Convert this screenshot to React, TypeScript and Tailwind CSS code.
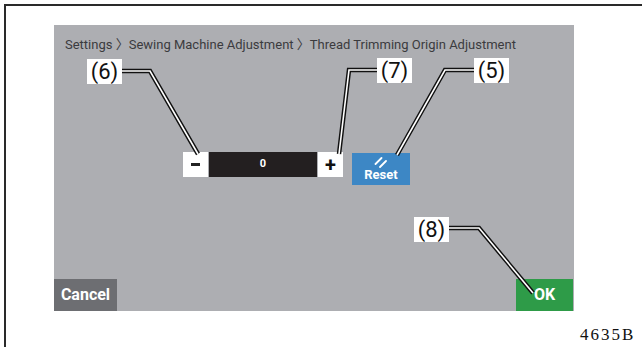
const callouts = [
  { label: "(6)", left: 87, top: 59 },
  { label: "(7)", left: 377, top: 58 },
  { label: "(5)", left: 474, top: 58 },
  { label: "(8)", left: 414, top: 217 },
];

const leaders = [
  "121,71 150,71 198,154",
  "377,70 349,70 339,154",
  "474,70 445,70 397,155",
  "448,228 479,228 533,293",
];

export default function App() {
  return (
    <div className="relative w-[642px] h-[347px] overflow-hidden bg-white font-['Roboto','Noto_Sans_CJK_JP',sans-serif]">
      {/* frame */}
      <div className="ml-[4px] mt-[4px] h-[343px] border-l-2 border-t-2 border-[#2a2a2a] pl-[48px] pt-[19px]">
        {/* screen */}
        <div className="flex h-[286px] w-[520px] flex-col bg-[#adaeb2]">
          <div className="pl-[11px] pt-[13px] text-[13px] leading-[14px] text-[#3b3b3e]">
            Settings 〉Sewing Machine Adjustment 〉Thread Trimming Origin Adjustment
          </div>

          <div className="mt-[100px] flex items-start pl-[129px]">
            <div className="flex gap-[1px]">
              <button className="flex h-[25px] w-[25px] items-center justify-center bg-white">
                <span className="h-[3px] w-[9px] bg-[#222]" />
              </button>
              <div className="flex h-[25px] w-[108px] items-center justify-center bg-[#231f20] text-[11px] font-bold text-white">
                0
              </div>
              <button className="flex h-[25px] w-[25px] items-center justify-center bg-white text-[20px] font-bold leading-none text-[#111]">
                +
              </button>
            </div>
            <button className="ml-[9px] mt-[1px] flex h-[32px] w-[58px] flex-col items-center bg-[#3d87c5] pt-[3px] text-white">
              <svg width="14" height="12" viewBox="0 0 14 12">
                <path d="M1.5 8 L7.5 2 M6 11 L12 5" stroke="white" strokeWidth="1.8" strokeLinecap="round" />
              </svg>
              <span className="text-[13px] font-bold leading-[14px]">Reset</span>
            </button>
          </div>

          <div className="mt-auto flex justify-between">
            <button className="h-[32px] w-[63px] bg-[#6d6e72] text-[16px] font-bold text-white">Cancel</button>
            <button className="mr-[1px] h-[32px] w-[57px] bg-[#2e9b48] text-[16px] font-bold text-white">OK</button>
          </div>
        </div>
      </div>

      {/* leader lines */}
      <svg className="pointer-events-none absolute left-0 top-0" width="642" height="347">
        {leaders.map((p) => (
          <g key={p}>
            <polyline points={p} fill="none" stroke="#111" strokeWidth="4.5" strokeLinejoin="miter" />
            <polyline points={p} fill="none" stroke="white" strokeWidth="1.6" strokeLinejoin="miter" />
          </g>
        ))}
      </svg>

      {callouts.map((c) => (
        <div
          key={c.label}
          className="absolute flex h-[25px] w-[35px] items-center justify-center bg-white text-[22px] leading-none text-[#111]"
          style={{ left: c.left, top: c.top }}
        >
          {c.label}
        </div>
      ))}

      <div className="absolute left-[580px] top-[322px] font-['Liberation_Serif',serif] text-[17px] tracking-[2px] text-[#111]">
        4635B
      </div>
    </div>
  );
}
